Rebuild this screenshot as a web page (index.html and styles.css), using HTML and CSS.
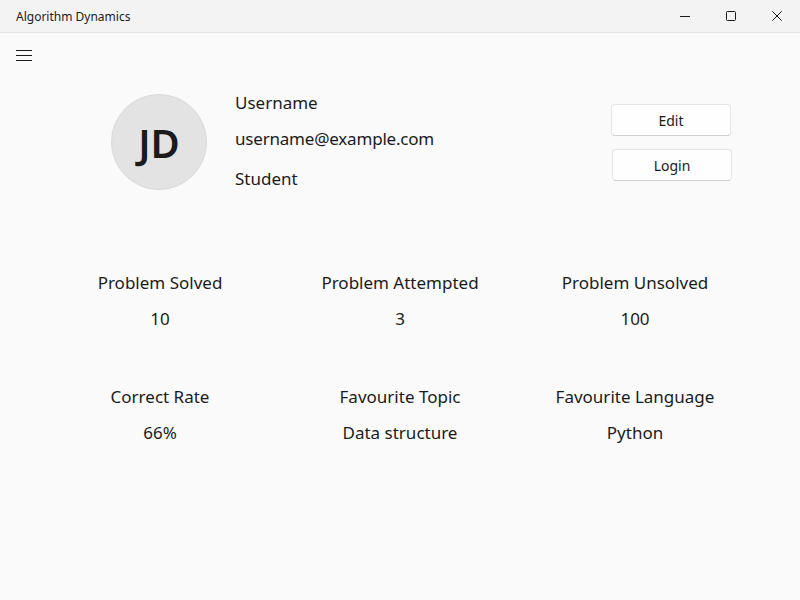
FILE: index.html
```html
<!DOCTYPE html>
<html>
<head>
<meta charset="utf-8">
<link rel="stylesheet" href="styles.css">
</head>
<body>
<div class="window">
  <div class="titlebar">
    <div class="title">Algorithm Dynamics</div>
    <div class="controls">
      <div class="ctl"><svg width="10" height="10" viewBox="0 0 10 10"><path d="M0 5.5H10" stroke="#1b1b1b" stroke-width="1"/></svg></div>
      <div class="ctl"><svg width="10" height="10" viewBox="0 0 10 10"><rect x="0.5" y="0.5" width="9" height="9" rx="1" fill="none" stroke="#1b1b1b" stroke-width="1"/></svg></div>
      <div class="ctl"><svg width="10" height="10" viewBox="0 0 10 10"><path d="M0.3 0.3L9.7 9.7M9.7 0.3L0.3 9.7" stroke="#1b1b1b" stroke-width="1"/></svg></div>
    </div>
  </div>
  <div class="content">
    <div class="menu"><svg width="16" height="12" viewBox="0 0 16 12"><path d="M0 0.5H16M0 5.5H16M0 10.5H16" stroke="#1b1b1b" stroke-width="1"/></svg></div>
    <div class="profile">
      <div class="avatar">JD</div>
      <div class="info">
        <div class="name">Username</div>
        <div class="email">username@example.com</div>
        <div class="role">Student</div>
      </div>
      <div class="actions">
        <button class="btn">Edit</button>
        <button class="btn btn-login">Login</button>
      </div>
    </div>
    <div class="stats">
      <div class="stat"><div class="label">Problem Solved</div><div class="value">10</div></div>
      <div class="stat"><div class="label">Problem Attempted</div><div class="value">3</div></div>
      <div class="stat"><div class="label">Problem Unsolved</div><div class="value">100</div></div>
      <div class="stat"><div class="label">Correct Rate</div><div class="value">66%</div></div>
      <div class="stat"><div class="label">Favourite Topic</div><div class="value">Data structure</div></div>
      <div class="stat"><div class="label">Favourite Language</div><div class="value">Python</div></div>
    </div>
  </div>
</div>
</body>
</html>
```
FILE: styles.css
```css
* { box-sizing: border-box; }
html, body { margin: 0; padding: 0; }
body {
  width: 800px;
  height: 600px;
  overflow: hidden;
  font-family: "Noto Sans", "Open Sans", sans-serif;
  color: #1b1b1b;
  background: #fafafa;
}
.window { width: 800px; height: 600px; display: flex; flex-direction: column; }
.titlebar {
  height: 33px;
  flex: none;
  background: #f3f3f3;
  border-bottom: 1px solid #e5e5e5;
  display: flex;
  align-items: center;
}
.title { padding-left: 16px; font-size: 12px; flex: 1; }
.controls { display: flex; height: 32px; }
.ctl { width: 46px; height: 32px; display: flex; align-items: center; justify-content: center; }
.content { flex: 1; background: #fafafa; padding-top: 17px; }
.menu { margin-left: 16px; height: 12px; display: flex; }
.profile {
  display: flex;
  align-items: flex-start;
  padding-left: 111px;
  padding-right: 68px;
  margin-top: 32px;
}
.avatar {
  width: 96px;
  height: 96px;
  border-radius: 50%;
  background: #e3e3e3;
  border: 1px solid #d9d9d9;
  display: flex;
  align-items: center;
  justify-content: center;
  font-size: 40px;
  font-weight: 600;
  flex: none;
}
.info { margin-left: 28px; margin-top: -3px; font-size: 17px; line-height: 24px; }
.email { margin-top: 12px; letter-spacing: -0.2px; }
.role { margin-top: 16px; }
.actions { margin-left: auto; margin-top: 10px; display: flex; flex-direction: column; gap: 13px; }
.btn {
  width: 120px;
  height: 32px;
  font-family: inherit;
  font-size: 14px;
  color: #1b1b1b;
  background: #fefefe;
  border: 1px solid #e5e5e5;
  border-bottom-color: #d0d0d0;
  border-radius: 4px;
  padding: 0;
}
.btn-login { margin-left: 1px; }
.stats {
  display: grid;
  grid-template-columns: 240px 240px 230px;
  row-gap: 54px;
  margin-left: 40px;
  margin-top: 80px;
}
.stat { display: flex; flex-direction: column; align-items: center; text-align: center; }
.label { font-size: 17px; line-height: 24px; }
.value { font-size: 17px; line-height: 24px; margin-top: 12px; }
```
